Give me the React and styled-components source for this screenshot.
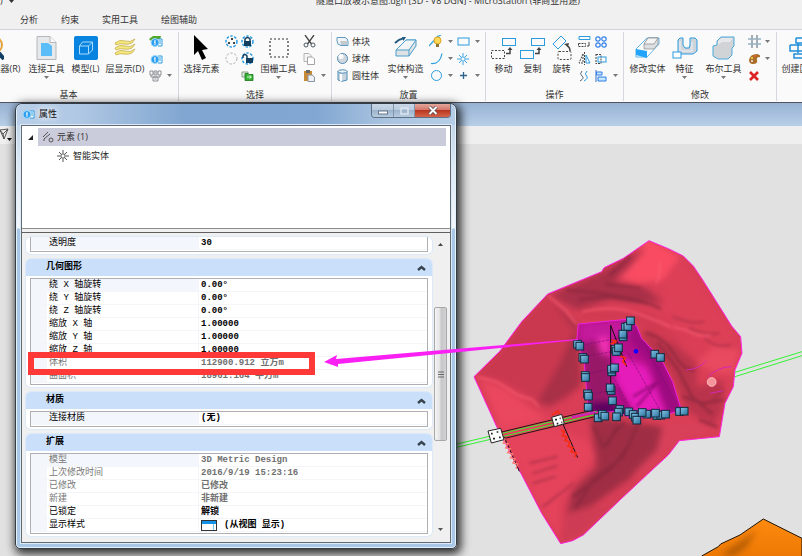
import React from 'react';
import styled, { createGlobalStyle } from 'styled-components';

const GlobalStyle = createGlobalStyle`
  * { box-sizing: border-box; }
  html, body, #root { height: 100%; }
  body {
    margin: 0;
    overflow: hidden;
    background: #e1e1e1;
    color: #333;
    font: 9px/12px "Open Sans", "Noto Sans CJK SC", sans-serif;
  }
  button {
    margin: 0; padding: 0; border: 0; background: none;
    font: inherit; color: inherit; cursor: pointer;
  }
  svg { display: block; flex: none; }
`;

/* ---------- shell ---------- */
const Page = styled.div`
  position: relative;
  display: flex;
  flex-direction: column;
  height: 100%;
  overflow: hidden;
`;
const TitleBar = styled.header`
  display: flex;
  align-items: center;
  height: 16px;
  margin-top: -7px;
  background: #f0f0f0;
`;
const QuickAccess = styled.div`
  display: flex;
  align-items: center;
  gap: 6px;
  width: 94px;
`;
const WindowTitle = styled.div`
  flex: 1;
  text-align: center;
  white-space: nowrap;
`;
const Tabs = styled.nav`
  display: flex;
  gap: 23px;
  height: 20px;
  padding: 1px 0 0 20px;
  background: #f0f0f0;
  white-space: nowrap;
`;
const TabButton = styled.button`
  height: 19px;
`;
const Ribbon = styled.div`
  display: flex;
  height: 74px;
  border-top: 1px solid #d2d4dc;
  border-bottom: 1px solid #50545c;
  background: #fafafa;
`;
const Group = styled.section`
  display: flex;
  flex-direction: column;
  flex: 0 0 ${(p) => p.$width}px;
  margin: 2px 0 1px ${(p) => p.$shift || 0}px;
  border-right: 1px solid #d5d7e0;
  overflow: hidden;
`;
const GroupBody = styled.div`
  display: flex;
  height: 53px;
  padding: 1px 0 0 ${(p) => p.$pad}px;
`;
const GroupLabel = styled.div`
  flex: 1;
  padding-top: 5px;
  text-align: center;
`;
const BigButton = styled.button`
  display: flex;
  flex-direction: column;
  align-items: center;
  flex: 0 0 ${(p) => p.$width}px;
  height: 50px;
  white-space: nowrap;
  line-height: 13px;
`;
const BigIcon = styled.span`
  display: flex;
  align-items: center;
  justify-content: center;
  height: 29px;
`;
const BigLabel = styled.span`
  display: flex;
  justify-content: center;
  width: 0;
  height: 14px;
`;
const ToolGrid = styled.div`
  display: grid;
  grid-template-columns: ${(p) => p.$cols};
  grid-auto-rows: 17px;
  flex: none;
`;
const ToolButton = styled.button`
  display: flex;
  align-items: center;
  justify-content: center;
`;
const ListTools = styled.div`
  display: grid;
  grid-auto-rows: 17px;
  width: 48px;
`;
const ListTool = styled.button`
  display: flex;
  align-items: center;
  gap: 3px;
  white-space: nowrap;
`;

/* ---------- workspace ---------- */
const Workspace = styled.main`
  display: flex;
  flex-direction: column;
  flex: 1;
  min-height: 0;
`;
const ViewTitle = styled.div`
  height: 23px;
  background: linear-gradient(#98b2d3, #b8cfe8);
`;
const ViewTools = styled.div`
  display: flex;
  align-items: center;
  height: 18px;
  background: #efefef;
`;
const Canvas = styled.div`
  flex: 1;
  min-height: 0;
  background: #e1e1e1;
`;
const Scene = styled.svg`
  width: 100%;
  height: 100%;
`;
const Annotation = styled.svg`
  position: absolute;
  top: 0;
  left: 0;
  width: 100%;
  height: 100%;
  pointer-events: none;
`;

/* ---------- dialog ---------- */
const Dialog = styled.section`
  position: absolute;
  top: 103px;
  left: 15px;
  right: 345px;
  padding: 0 5px 5px;
  border: 1px solid #343c46;
  border-radius: 7px 7px 5px 5px;
  background: linear-gradient(#b4cbe4 0, #dce8f4 60px, #f2f7fc 124px, #a6c7e6 125px, #a9c8e8 100%);
  box-shadow: inset 0 0 0 1px #e4f0fa, 2px 3px 10px 2px rgba(0, 0, 0, 0.8);
`;
const DialogTitle = styled.header`
  display: flex;
  align-items: center;
  gap: 4px;
  height: 21px;
  margin: 0 -4px;
  padding: 0 0 2px 4px;
  border-radius: 6px 6px 0 0;
  background: linear-gradient(90deg, #b9cfe8 0, #b0c8e4 60px, #7fa5d0 170px, #82a7d2 300px, #aac4e0 370px, #b5cde6);
`;
const DialogName = styled.h1`
  flex: 1;
  margin: 0;
  font: inherit;
  color: #111;
  text-shadow: 0 0 6px #fff, 0 0 8px #fff;
`;
const Caption = styled.div`
  display: flex;
  align-self: flex-start;
  height: 14px;
  margin-right: 4px;
  border: 1px solid #5f7186;
  border-top: 0;
  border-radius: 0 0 4px 4px;
  overflow: hidden;
`;
const CaptionButton = styled.button`
  display: flex;
  align-items: center;
  justify-content: center;
  width: ${(p) => (p.$close ? 36 : 21)}px;
  border-left: 1px solid #8195ab;
  background: ${(p) => (p.$close
    ? 'linear-gradient(#e4a79c, #d5776a 45%, #b93720 50%, #d4644a)'
    : 'linear-gradient(#c9d8e8, #b8cadd 45%, #9db4cc 50%, #b6cbe0)')};
  &:first-child { border-left: 0; }
`;
const DialogBody = styled.div`
  border: 1px solid #626a73;
  outline: 1px solid #dceaf7;
  background: #f0f0f0;
`;
const Tree = styled.ul`
  height: 103px;
  margin: 0;
  padding: 2px 4px 0 0;
  border-bottom: 1px solid #8c8c8c;
  background: #fff;
  list-style: none;
`;
const TreeItem = styled.li`
  display: flex;
  align-items: center;
  gap: 4px;
  height: 18px;
  margin: 0 0 1px ${(p) => p.$indent}px;
  padding-left: 3px;
  color: #222;
`;
const TreeRoot = styled.li`
  display: flex;
  align-items: center;
`;
const Selected = styled.div`
  display: flex;
  align-items: center;
  gap: 3px;
  flex: 1;
  height: 18px;
  margin-bottom: 1px;
  padding-left: 4px;
  background: #cbccdb;
`;
const Toggle = styled.button`
  display: flex;
  justify-content: center;
  width: 16px;
`;
const Pane = styled.div`
  display: flex;
  gap: 2px;
  margin-top: 3px;
  padding: 4px 3px 6px 4px;
  border-top: 1px solid #5f5f5f;
  background: #f0f0f0;
`;
const Sections = styled.div`
  display: flex;
  flex-direction: column;
  gap: 5px;
  flex: 1;
  min-width: 0;
`;
const SectionBox = styled.section`
  border-radius: 5px;
  background: #fff;
  box-shadow: 0 0 1px 1px #dce9f8;
`;
const SectionHead = styled.h2`
  margin: 0;
  border-radius: 5px 5px 0 0;
  background: #c9dffa;
  font: bold 9px/17px "Liberation Mono", "Noto Sans CJK SC", monospace;
  color: #000;
`;
const SectionToggle = styled.button`
  display: flex;
  align-items: center;
  justify-content: space-between;
  width: 100%;
  height: 17px;
  padding: 0 6px 0 20px;
`;
const TableFrame = styled.div`
  margin: 0 4px;
  padding: ${(p) => (p.$cut ? 0 : 2)}px 0 2px;
`;
const Table = styled.table`
  width: 100%;
  border: 1px solid #aeb0b3;
  border-top-width: ${(p) => (p.$cut ? 0 : 1)}px;
  padding-bottom: 1px;
  border-spacing: 0;
  table-layout: fixed;
  background: #fff;
  font: 9px/12px "Liberation Mono", "Noto Sans CJK SC", monospace;
  color: #000;
  white-space: nowrap;
`;
const Name = styled.th`
  position: relative;
  width: 167px;
  height: 13px;
  padding: 0 0 0 2px;
  border-left: 16px solid #f3f6fb;
  border-bottom: 1px solid #f4f5f8;
  font-weight: normal;
  text-align: left;
  background: ${(p) => (p.$first ? '#f3f6fc' : '#fff')};
  color: ${(p) => (p.$dim ? '#777' : '#000')};
`;
const Value = styled.td`
  height: 13px;
  padding: 0 0 0 2px;
  border-bottom: 1px solid #f4f5f8;
  border-left: 1px solid #f4f5f8;
  font-weight: bold;
  color: ${(p) => (p.$dim ? '#707070' : '#000')};
`;
const ValueInner = styled.span`
  display: flex;
  align-items: center;
  gap: 7px;
  height: 12px;
`;
const Highlight = styled.span`
  position: absolute;
  z-index: 1;
  top: -5px;
  left: -19px;
  width: 287px;
  height: 23px;
  border: 6px solid #ff3838;
`;
const ScrollBar = styled.div`
  display: flex;
  flex-direction: column;
  align-items: center;
  width: 13px;
`;
const ScrollButton = styled.button`
  display: flex;
  align-items: center;
  justify-content: center;
  width: 13px;
  height: 14px;
`;
const ScrollTrack = styled.div`
  display: flex;
  flex: 1;
  width: 13px;
  padding: 56px 0 81px;
`;
const Thumb = styled.div`
  display: flex;
  align-items: center;
  justify-content: center;
  flex: 1;
  border: 1px solid #a8a8a8;
  border-radius: 2px;
  background: linear-gradient(90deg, #f5f5f5, #e2e2e2 45%, #c6c6c8 55%, #d2d2d4);
`;

/* ---------- icons ---------- */
const B = '#2b9be0';
const K = '#444';
const Icon = ({ w = 14, h = w, children }) => (
  <svg width={w} height={h} viewBox={`0 0 ${w} ${h}`} fill="none" aria-hidden="true">{children}</svg>
);
const Caret = ({ color = '#777' }) => (
  <Icon w={5} h={3}><path d="M0 0h5L2.5 3z" fill={color} /></Icon>
);
const Magnifier = () => (
  <Icon w={22} h={24}>
    <circle cx="12" cy="9" r="8" fill="#dff0fc" stroke="#e8a33a" strokeWidth="2" />
    <path d="M16 16l6 7" stroke="#123f66" strokeWidth="4" />
  </Icon>
);
const AttachDoc = () => (
  <Icon w={22} h={26}>
    <path d="M1 1.500h13l6 6v17H1z" fill="#e6e8ea" stroke="#b4b8bc" />
    <path d="M14 1.500v6h6" fill="#fafafa" stroke="#b4b8bc" />
    <path d="M5 8h7l4 3v10H5z" fill="#5abdf8" />
  </Icon>
);
const ModelCube = () => (
  <Icon w={24}>
    <rect width="24" height="24" rx="2" fill="#0884e0" />
    <path d="M5.500 10l3-4h10v8l-4 4h-9zM5.500 10h9v8M14.500 10l4-4" stroke="#a9dcff" />
  </Icon>
);
const Layers = () => (
  <Icon w={22} h={20}>
    {[12, 7, 2].map((y) => (
      <path key={y} d={`M1 ${y + 3}q5-4 10-2t10-2l-3 4q-4 2-8 1t-8 1z`} fill="#f5e97d" stroke="#c7ad4e" strokeWidth=".8" />
    ))}
  </Icon>
);
const InfoIcon = ({ green }) => (
  <Icon w={14} h={13}>
    {green && <path d="M0 4l4-3h8l-1 4-8 2z" fill="#53a82b" />}
    <path d="M9 4h4v7H9" fill="#fff" stroke={B} />
    <path d="M10 6h2M10 8h2" stroke={B} />
    <circle cx="6" cy="7.500" r="4" fill="#2c9ff0" stroke="#a8dcfb" />
    <path d="M6 5v5M5 7h1" stroke="#fff" />
  </Icon>
);
const Keys = () => (
  <Icon w={13}>
    <path d="M1 2h3v4H1zM5 2h3v4H5zM9 2h3v4H9zM4 8h5v4H4zM2 6v2h9V6M5.500 4h2M5.500 10h2" stroke="#8b8f94" />
  </Icon>
);
const Pointer = () => (
  <Icon w={17} h={26}><path d="M1 0v20l4-4 4 9 4-2-4-8 6-1z" fill="#000" /></Icon>
);
const DashRing = ({ kind }) => (
  <Icon w={13}>
    <circle cx="6.500" cy="6.500" r="5.500" stroke={kind === 'none' ? '#a9adb3' : B} strokeWidth={kind === 'none' ? 1 : 1.5} strokeDasharray="2.500 1.500" />
    {kind === 'dots' && <path d="M6 3h2v2H6zM3 7h2v2H3zM8 7h2v2H8z" fill="#444" />}
    {kind === 'lock' && <><path d="M4 6V4q2.500-3 5 0v2" stroke="#123f5f" strokeWidth="1.500" /><path d="M3 6h7v5H3z" fill="#123f5f" /></>}
    {kind === 'open' && <><path d="M2 6V4q2-3 4 0v2" stroke="#123f5f" strokeWidth="1.500" /><path d="M5 6h7v5H5z" fill="#123f5f" /></>}
  </Icon>
);
const GreenSet = () => (
  <Icon w={13} h={10}>
    <path d="M1 1h6v5H1z" fill="#dfe8df" stroke="#8aa08a" />
    <path d="M4 2.500h3l1 1h4v6H4z" fill="#35b335" stroke="#1a741a" strokeWidth=".8" />
    <path d="M6 6h4M8.500 4.500L10.500 6 8.500 7.500" stroke="#d8ffd0" />
  </Icon>
);
const Fence = () => (
  <Icon w={20}><rect x="1" y="1" width="18" height="18" stroke="#333" strokeWidth="1.200" strokeDasharray="2 2" /></Icon>
);
const CutIcon = () => (
  <Icon w={13}>
    <path d="M2 0l6.500 9M11 0L4.500 9" stroke="#444" strokeWidth="1.300" />
    <circle cx="3" cy="10" r="2" stroke="#4b5864" /><circle cx="10" cy="10" r="2" stroke="#4b5864" />
  </Icon>
);
const CopyIcon = () => (
  <Icon w={12}><path d="M1 .5h5l2 2v6H1z" fill="#f5f5f5" stroke="#b5b5b5" /><path d="M4.500 4h5l2 2v5.500h-7z" fill="#fff" stroke="#a5a5a5" /></Icon>
);
const PasteIcon = () => (
  <Icon w={12}><path d="M1 1h8v10H1z" fill="#c98a38" /><path d="M3 0h4v3H3z" fill="#666" /><path d="M5 5h4l2.500 2v4.500H5z" fill="#eef1f5" stroke="#8a94a0" /></Icon>
);
const Slab = () => (
  <Icon w={13} h={11}><path d="M1 1.500h8q3 1 3 4v4H5Q1 9 1 5z" fill="#f2f4f6" stroke="#5d9cc4" /><path d="M4 5h7v4H5z" fill="#c3c9ce" /></Icon>
);
const Ball = () => (
  <Icon w={13}><circle cx="6.500" cy="6.500" r="5" fill="#cfd6dc" stroke="#4d8cb8" /><circle cx="5" cy="4.500" r="2.500" fill="#fff" /></Icon>
);
const Cylinder = () => (
  <Icon w={13}><path d="M2 2v9q4.500 2.500 9 0V2" fill="#c8d4df" stroke="#4d8cb8" /><ellipse cx="6.500" cy="2.500" rx="4.500" ry="1.700" fill="#eef3f7" stroke="#4d8cb8" /><path d="M5 5v7" stroke="#fff" strokeWidth="2" /></Icon>
);
const Extrude = () => (
  <Icon w={24} h={22}>
    <path d="M2 13L12 3h10v6l-7 10H2z" fill="#dfe2e5" stroke="#4c9ecb" />
    <path d="M2 13L12 3h10l-7 10z" fill="#f3f4f5" stroke="#4c9ecb" /><path d="M15 13v6" stroke="#4c9ecb" />
    <path d="M1 6q4-4 8-4.500" stroke="#235a80" strokeWidth="1.800" /><path d="M8 0h4L9.500 4z" fill="#235a80" />
  </Icon>
);
const LineBulb = () => (
  <Icon w={14}><path d="M0 11L9 1M8 2l4-2" stroke="#37a7d8" strokeWidth="1.300" /><circle cx="8.500" cy="5.500" r="3.500" fill="#ffd95a" stroke="#dfa21c" /><path d="M7 9h3v3H7z" fill="#8a7436" /></Icon>
);
const RectIcon = () => <Icon w={13}><rect x="1" y="3" width="11" height="7" stroke={B} /></Icon>;
const ArcIcon = () => <Icon w={13}><path d="M1 11.500q9 1 11-10" stroke={B} strokeWidth="1.200" /></Icon>;
const CircleIcon = () => <Icon w={13}><circle cx="6.500" cy="6.500" r="5" stroke={B} /></Icon>;
const Sun = ({ color = B }) => (
  <Icon w={12}><circle cx="6" cy="6" r="2.200" stroke={color} /><path d="M6 0v3M6 9v3M0 6h3M9 6h3M2 2l2 2M8 8l2 2M10 2L8 4M4 8l-2 2" stroke={color} strokeWidth=".9" /></Icon>
);
const Plus = () => <Icon w={9}><path d="M4.500 1v7M1 4.500h7" stroke="#2c628c" strokeWidth="1.300" /></Icon>;
const MoveIcon = ({ copy }) => (
  <Icon w={25} h={24}>
    <rect x="11.500" y="2.500" width="13" height="7" stroke={B} />
    {copy
      ? <rect x=".5" y="14.500" width="13" height="8" stroke={B} />
      : <rect x=".5" y="14.500" width="13" height="8" stroke={K} strokeDasharray="2 1.500" />}
    <path d="M15 17.500h4V13" stroke={K} strokeWidth="1.500" /><path d="M16.500 14l2.500-3 2.500 3z" fill={K} />
  </Icon>
);
const RotateIcon = () => (
  <Icon w={20} h={26}>
    <path d="M9 1l5 5-8 8-5-5z" stroke={B} />
    <rect x="6" y="16.500" width="13" height="8" rx="1" stroke={K} strokeDasharray="2 1.500" />
    <path d="M18 16q0-4-3-5" stroke={K} strokeWidth="1.500" /><path d="M12 9l5-1-1 4z" fill={K} />
  </Icon>
);
const SwapIcon = () => <Icon w={13}><path d="M1 1.500h11v3H1z" stroke={B} /><path d="M.5 8.500h7v3h-7z" stroke={K} strokeDasharray="2 1" /><path d="M9 11h2V7" stroke={K} /></Icon>;
const Array4 = () => (
  <Icon w={12}>{[[3, 3], [9, 3], [3, 9], [9, 9]].map(([x, y]) => <circle key={x + '-' + y} cx={x} cy={y} r="2.200" stroke="#2f7fe8" strokeWidth="1.200" />)}</Icon>
);
const MirrorIcon = () => <Icon w={13}><path d="M5 2v9H1zM6.500 0v13" stroke={K} strokeDasharray="2 1" /><path d="M8 3v8h4z" stroke={B} /></Icon>;
const StretchIcon = () => <Icon w={12}><path d="M1 1v10M1 1.500h5v9H1" stroke={K} strokeDasharray="2 1" /><rect x="3" y="4" width="8" height="5" stroke={B} /></Icon>;
const WaveIcon = () => <Icon w={12}><path d="M4 1q-3 3 0 5t-2 5" stroke="#55697a" /><path d="M9 1Q6 4 8.500 6T6 11" stroke={B} /></Icon>;
const AlignIcon = () => <Icon w={12}><path d="M1 0v12" stroke="#2f6ec8" /><path d="M1.500 2H7v3H1.500zM3 7h8v4H3z" fill="#c5e6fb" stroke="#2f7fe8" /></Icon>;
const EditSolid = () => (
  <Icon w={25} h={22}>
    <path d="M1 12l11-11h12v6L12 20H1z" fill="#fff" stroke="#5fb4e8" /><path d="M1 12l11 2v7L1 18z" fill="#24a4fa" />
    <path d="M9 7l4-6h10v6l-4 5H9z" fill="#dcdfe2" stroke="#888" strokeWidth=".7" /><path d="M9 7l4-6h10l-4 6z" fill="#f4f4f4" stroke="#888" strokeWidth=".7" />
  </Icon>
);
const FeatureIcon = () => (
  <Icon w={26} h={22}>
    <path d="M6 3l2-2h3v7l2 3h4l1-3V1h5l2 2v11l-4 3H9l-3-2z" fill="#cfd4da" stroke={B} />
    <path d="M8 4v10h12V5" stroke="#eef1f4" />
    <rect x="1" y="15" width="8" height="6" fill="#fff" stroke={B} />
  </Icon>
);
const BooleanIcon = () => (
  <Icon w={23} h={24}>
    <path d="M5 5l4-4h13v9l-2 2v7l-4 4H6l-5-3V10l4-1z" fill="#d0d4d7" stroke="#4ba9df" /><path d="M6 5l4-3h11l-3 4h-8L6 9" fill="#e6e8ea" />
  </Icon>
);
const HashIcon = () => <Icon w={13}><path d="M4 0v13M9 0v13" stroke="#4c6474" /><path d="M0 4h3M5 4h3M10 4h3M0 9h3M5 9h3M10 9h3" stroke="#5b8eae" /></Icon>;
const Palette = () => (
  <Icon w={13} h={12}><path d="M1 7q1-6 8-6 4 1 3 3-4 0-3 3 1 4-4 4-4 0-4-4z" fill="#a96f28" /><circle cx="4" cy="5" r="1" fill="#ffdc55" /><circle cx="7" cy="3" r="1" fill="#f4593c" /><circle cx="4" cy="8" r="1" fill="#eee" /></Icon>
);
const DeleteIcon = () => <Icon w={10}><path d="M1 1l8 8M9 1L1 9" stroke="#dc2424" strokeWidth="2.600" /></Icon>;
const CreateIcon = () => <Icon w={22} h={24}><path d="M7 2h15M7 2v5h15M1 9h21M1 9v6h21M9 7v10M5 18h16v4H5z" stroke="#1f8ed8" strokeWidth="1.500" /></Icon>;
const Funnel = () => (
  <Icon w={13} h={14}><path d="M0 2l8-1-4 10zM0 2l3 4 5-5M3 6l1 5" stroke="#555" /><path d="M7 10h5l-2.500 3z" fill="#111" /></Icon>
);
const ElementIcon = () => (
  <Icon w={12}><path d="M1 6l5-5M2 10V8l6-5" stroke="#555" /><circle cx="9" cy="9" r="2" stroke="#555" /></Icon>
);
const Chevron = () => <Icon w={9} h={6}><path d="M1 5l3.500-3L8 5" stroke="#38434d" strokeWidth="2.400" /></Icon>;
const StyleSwatch = () => (
  <Icon w={16} h={11}><rect x=".5" y=".5" width="15" height="10" fill="#fff" stroke="#333" /><path d="M1 1h14v3H1z" fill="#1492e8" /><path d="M12.500 4v6" stroke="#7cc4f2" /></Icon>
);

/* ---------- ribbon data ---------- */
const V = <Caret />;
const groups = [
  {
    label: '基本', width: 220, shift: -41, pad: 2,
    items: [
      { big: '资源管理器(R)', icon: <Magnifier />, width: 63 },
      { big: '连接工具', icon: <AttachDoc />, width: 45, menu: true },
      { big: '模型(L)', icon: <ModelCube />, width: 33 },
      { big: '层显示(D)', icon: <Layers />, width: 46 },
      { cols: '15px 13px', tools: [['元素信息', <InfoIcon green />], null, ['属性', <InfoIcon />], null, ['键入命令', <Keys />], ['更多', V]] },
    ],
  },
  {
    label: '选择', width: 153, pad: 1,
    items: [
      { big: '选择元素', icon: <Pointer />, width: 43 },
      { cols: '16px 16px', tools: [['全选', <DashRing kind="dots" />], ['锁定', <DashRing kind="lock" />], ['取消选择', <DashRing kind="none" />], ['解锁', <DashRing kind="open" />], null, ['图组', <GreenSet />]] },
      { big: '围栅工具', icon: <Fence />, width: 47, menu: true },
      { cols: '14px 14px', tools: [['剪切', <CutIcon />], null, ['复制', <CopyIcon />], null, ['粘贴', <PasteIcon />], ['更多', V]] },
    ],
  },
  {
    label: '放置', width: 154, pad: 4,
    items: [
      { list: [['体块', <Slab />], ['球体', <Ball />], ['圆柱体', <Cylinder />]] },
      { big: '实体构造', icon: <Extrude />, width: 43, menu: true },
      {
        cols: '18px 10px 16px 12px',
        tools: [['智能线', <LineBulb />], ['更多', V], ['块', <RectIcon />], ['更多', V], ['弧', <ArcIcon />], ['更多', V], ['点', <Sun />], null, ['圆', <CircleIcon />], ['更多', V], ['十字', <Plus />], ['更多', V]],
      },
    ],
  },
  {
    label: '操作', width: 138, pad: 3,
    items: [
      { big: '移动', icon: <MoveIcon />, width: 29 },
      { big: '复制', icon: <MoveIcon copy />, width: 29 },
      { big: '旋转', icon: <RotateIcon />, width: 29 },
      { cols: '16px 18px 10px', tools: [['缩放', <SwapIcon />], ['阵列', <Array4 />], null, ['镜像', <MirrorIcon />], ['拉伸', <StretchIcon />], null, ['平行', <WaveIcon />], ['对齐', <AlignIcon />], ['更多', V]] },
    ],
  },
  {
    label: '修改', width: 153, pad: 2,
    items: [
      { big: '修改实体', icon: <EditSolid />, width: 43 },
      { big: '特征', icon: <FeatureIcon />, width: 31, menu: true },
      { big: '布尔工具', icon: <BooleanIcon />, width: 47, menu: true },
      { cols: '14px 12px', tools: [['修剪', <HashIcon />], ['更多', V], ['更改属性', <Palette />], ['更多', V], ['删除', <DeleteIcon />], null] },
    ],
  },
  { label: '', width: 153, pad: 4, items: [{ big: '创建区域', icon: <CreateIcon />, width: 37 }] },
];

function RibbonItem({ item }) {
  if (item.big) {
    return (
      <BigButton $width={item.width}>
        <BigIcon>{item.icon}</BigIcon>
        <BigLabel>{item.big}</BigLabel>
        {item.menu && <Caret />}
      </BigButton>
    );
  }
  if (item.list) {
    return <ListTools>{item.list.map(([t, icon]) => <ListTool key={t}>{icon}{t}</ListTool>)}</ListTools>;
  }
  return (
    <ToolGrid $cols={item.cols}>
      {item.tools.map((t, i) => (t ? <ToolButton key={i} aria-label={t[0]}>{t[1]}</ToolButton> : <span key={i} />))}
    </ToolGrid>
  );
}

/* ---------- property data ---------- */
const sections = [
  { rows: [{ n: '透明度', v: '30' }] },
  {
    title: '几何图形',
    rows: [
      { n: '绕 X 轴旋转', v: '0.00°' }, { n: '绕 Y 轴旋转', v: '0.00°' }, { n: '绕 Z 轴旋转', v: '0.00°' },
      { n: '缩放 X 轴', v: '1.00000' }, { n: '缩放 Y 轴', v: '1.00000' }, { n: '缩放 Z 轴', v: '1.00000' },
      { n: '体积', v: '112900.912 立方m', dim: true, mark: true },
      { n: '曲面积', v: '18961.164 平方m', dim: true },
    ],
  },
  { title: '材质', rows: [{ n: '连接材质', v: '(无)' }] },
  {
    title: '扩展',
    rows: [
      { n: '模型', v: '3D Metric Design', dim: true }, { n: '上次修改时间', v: '2016/9/19 15:23:16', dim: true },
      { n: '已修改', v: '已修改', dim: true }, { n: '新建', v: '非新建', dim: true },
      { n: '已锁定', v: '解锁' }, { n: '显示样式', v: '(从视图 显示)', swatch: true },
    ],
  },
];

function PropertySection({ title, rows }) {
  return (
    <SectionBox>
      {title && <SectionHead><SectionToggle>{title}<Chevron /></SectionToggle></SectionHead>}
      <TableFrame $cut={!title}>
        <Table $cut={!title}>
          <tbody>
            {rows.map((r, i) => (
              <tr key={r.n}>
                <Name scope="row" $first={i === 0} $dim={r.dim}>{r.n}{r.mark && <Highlight />}</Name>
                <Value $dim={r.dim}><ValueInner>{r.swatch && <StyleSwatch />}{r.v}</ValueInner></Value>
              </tr>
            ))}
          </tbody>
        </Table>
      </TableFrame>
    </SectionBox>
  );
}

function PropertiesDialog() {
  return (
    <Dialog aria-label="属性">
      <DialogTitle>
        <InfoIcon />
        <DialogName>属性</DialogName>
        <Caption>
          <CaptionButton aria-label="最小化"><Icon w={10} h={9}><rect x=".5" y="5" width="9" height="3" fill="#fff" stroke="#66788c" /></Icon></CaptionButton>
          <CaptionButton aria-label="最大化"><Icon w={9} h={8}><rect x="1" y="1" width="7" height="6" stroke="#dce6f0" strokeWidth="1.500" /></Icon></CaptionButton>
          <CaptionButton $close aria-label="关闭"><Icon w={10} h={9}><path d="M1.500 1l7 7M8.500 1l-7 7" stroke="#52484c" strokeWidth="3.500" /><path d="M1.500 1l7 7M8.500 1l-7 7" stroke="#fff" strokeWidth="2" /></Icon></CaptionButton>
        </Caption>
      </DialogTitle>
      <DialogBody>
        <Tree>
          <TreeRoot>
            <Toggle aria-label="折叠"><Icon w={5}><path d="M5 0v5H0z" fill="#222" /></Icon></Toggle>
            <Selected><ElementIcon />元素 (1)</Selected>
          </TreeRoot>
          <TreeItem $indent={32}><Sun color="#444" />智能实体</TreeItem>
        </Tree>
        <Pane>
          <Sections>{sections.map((s, i) => <PropertySection key={i} {...s} />)}</Sections>
          <ScrollBar>
            <ScrollButton aria-label="向上滚动"><Icon w={5} h={3}><path d="M0 3h5L2.500 0z" fill="#444" /></Icon></ScrollButton>
            <ScrollTrack><Thumb><Icon w={6} h={7}><path d="M0 1h6M0 3.500h6M0 6h6" stroke="#666" /></Icon></Thumb></ScrollTrack>
            <ScrollButton aria-label="向下滚动"><Caret color="#555" /></ScrollButton>
          </ScrollBar>
        </Pane>
      </DialogBody>
    </Dialog>
  );
}

/* ---------- terrain drawing ---------- */
const OUTLINE = 'M597 62L655 86 700 108 730 138 755 175 810 262 845 318 872 350 876 400 855 450 850 500 825 550 808 650 688 662 655 705 590 765 510 840 400 945 368 962 332 971 275 880 205 745 140 620 72 470 150 393 215 305 293 222 375 188 455 155 462 143 520 115Z';
const CUT = 'M385 312L540 297 560 318 575 355 610 392 640 430 668 485 695 572 620 590 545 595 500 575 415 577 402 420 380 365Z';
const handles = [
  [382, 372], [389, 378], [398, 412], [403, 417], [405, 466], [406, 472], [412, 521], [415, 528], [414, 561],
  [444, 593], [457, 582], [464, 588], [526, 321], [533, 319], [541, 302], [519, 350], [518, 342], [496, 388], [499, 394], [505, 383],
  [485, 455], [484, 447], [493, 443], [483, 511], [480, 503], [487, 542], [509, 568], [505, 576], [499, 590], [536, 575], [549, 583],
  [556, 591], [560, 600], [590, 582], [576, 577], [620, 586], [632, 585], [616, 579], [646, 582], [688, 574], [702, 573], [614, 402], [631, 412],
];

function Terrain() {
  return (
    <Scene viewBox="0 144 802 412" preserveAspectRatio="xMinYMin slice" fill="none" role="img" aria-label="三维地形模型">
      <defs>
        <clipPath id="land"><path d={OUTLINE} /></clipPath>
        <clipPath id="pit"><path d={CUT} /></clipPath>
        <filter id="soft" x="-20%" y="-20%" width="140%" height="140%" colorInterpolationFilters="sRGB"><feGaussianBlur stdDeviation="10" /></filter>
        <filter id="fine" x="-20%" y="-20%" width="140%" height="140%" colorInterpolationFilters="sRGB"><feGaussianBlur stdDeviation="4" /></filter>
        <linearGradient id="box" x1="0" y1="0" x2="1" y2="1"><stop stopColor="#83c4ea" /><stop offset="1" stopColor="#2a7098" /></linearGradient>
        <linearGradient id="orange" x1="0" y1="0" x2="0" y2="1"><stop stopColor="#ff8a10" /><stop offset="1" stopColor="#e87400" /></linearGradient>
      </defs>
      <g transform="translate(450 220) scale(.33333)">
        <path d={OUTLINE} fill="#da3e56" />
        <g clipPath="url(#land)">
          <g filter="url(#soft)">
            <path d="M590 50L690 110 640 180 560 190 500 170z" fill="#f94c62" />
            <path d="M455 155L590 80 530 150 490 185 590 205 640 250 480 240 380 270 300 225 380 190z" fill="#a83048" />
            <path d="M293 222L360 285 380 360 400 480 350 540 265 560 250 535 150 480 80 465 150 393 215 305z" fill="#c9384f" />
            <path d="M310 250L375 330 330 430 265 545 300 560 390 500 385 310z" fill="#a83047" />
            <path d="M700 130L790 260 850 350 830 420 740 350 640 270 650 190z" fill="#dc4057" />
            <path d="M570 330L650 350 740 430 740 500 820 480 820 560 790 620 710 570 660 450 600 390z" fill="#b9344b" />
            <path d="M420 590L500 600 640 620 660 670 590 740 420 860 350 880 370 810 440 740z" fill="#9f2e44" />
            <path d="M640 610L800 620 690 660 590 750 540 770 620 690z" fill="#d8405a" />
            <path d="M130 610L320 620 420 670 440 710 390 760 330 850 330 960 250 830z" fill="#e4435b" />
            <path d="M350 880L460 860 590 760 390 945 330 970z" fill="#cd3c54" />
            <path d="M90 475L170 510 250 570 300 600 150 620z" fill="#ea485f" />
            <path d="M400 265L600 280 700 370 640 370 550 300 400 300z" fill="#d03a51" />
            <path d="M790 380L870 390 850 460 800 460 740 430z" fill="#e94a60" />
          </g>
          <g filter="url(#fine)" strokeLinecap="round">
            <path d="M298 230l50 42 30 38M85 472q60 10 90 35t70 30l20 22M400 275q90-20 160 5t100 40M670 320q40 10 60 20t50 5M620 190q10-25 10-60" stroke="#fa5b70" strokeWidth="7" strokeOpacity=".7" />
            <path d="M350 210l100 10 120 20 60 25M390 238l90-8 120 22M470 192l100 12M590 340q50 10 80 60t60 50M625 370l60 80 40 80 60 50M430 620l30 60 60-70M470 680l30-60M570 600l-50 110-90 70-50 80M540 670l-60 80-110 80M750 600l50 20M700 530l60 20 60-10M540 110l-60 55" stroke="#82243b" strokeWidth="8" strokeOpacity=".6" />
            <path d="M670 290q60 25 90 15M720 325q45 20 85 15M765 355q30 30 75 20M780 550l40-40M240 730l80-20M250 760l70-22M250 790l65-20M280 860l90-70" stroke="#9a2b42" strokeWidth="6" strokeOpacity=".6" />
          </g>
        </g>
        <path d={OUTLINE} stroke="#ff24e4" strokeWidth="3" />
        <path d={CUT} fill="#b7108b" />
        <g clipPath="url(#pit)">
          <g filter="url(#soft)">
            <path d="M390 310L550 300 560 330 480 355 390 370z" fill="#c31a9c" />
            <path d="M400 370L480 360 480 560 420 575z" fill="#981868" />
            <path d="M485 400L590 440 650 580 560 585 500 490z" fill="#e51cba" />
            <path d="M440 350h40v60l-30-10z" fill="#f02fb4" />
            <path d="M540 300L640 430 690 570 650 580 600 430 540 360z" fill="#9c0b80" />
            <path d="M420 550l70-5 20 40-90-5z" fill="#5a0060" />
          </g>
          <path d="M500 500l40 80M550 530l75-45-65 75" stroke="#8f0975" strokeWidth="6" filter="url(#fine)" />
          <path d="M385 378l150-30M405 410l80-15M405 465l80-20M415 525l70-15M575 355l110 210M535 400l100 180M490 470l60 110" stroke="#75106e" strokeWidth="2" strokeDasharray="8 4" />
        </g>
        <path d={CUT} stroke="#f01fe2" strokeWidth="3" />
        <path d="M708 450q40-2 60-28M775 470q30-30 70-30M780 520l40-8" stroke="#d327b8" strokeWidth="3" />
        <path d="M20 672L440 574M20 682L440 583M855 457L1056 395M855 470L1056 407" stroke="#32f232" strokeWidth="3" />
        <path d="M155 636L430 570M160 656L435 590" stroke="#261414" strokeWidth="3" />
        <path d="M365 592l70-15" stroke="#cf20c0" strokeWidth="6" />
        <path d="M162 650L208 754M338 610L383 713M482 316v175M482 316L530 440" stroke="#160c12" strokeWidth="3" />
        <path d="M155 650l10 8-5 12 14 0-7 14 14 2-8 12 15 4-7 12 14 2-6 13 14 3-5 14" stroke="#ff7d75" strokeWidth="4" />
        <path d="M333 630l10 5-6 12 14 4-6 10 15 6-6 12 14 4-5 12 16 4-4 12M510 408l16 6-8 10 10 12M305 585l20-12 2 10M484 360l14 3-12 7h12" stroke="#f72c12" strokeWidth="5" />
        <g fill="#fff" stroke="#222" strokeWidth="3">
          <path d="M114 633l38-8 10 34-38 10z" /><path d="M305 592l30-9 8 28-30 9z" />
          <path d="M123 641h5M140 636h5M129 656h6M147 652h5M315 599h6M329 595h3M320 611h5M334 607h3" strokeWidth="5" />
        </g>
        <circle cx="558" cy="394" r="7" fill="#1600ff" />
        <circle cx="785" cy="486" r="13" fill="#f5959b" stroke="#ffc0c0" strokeWidth="3" />
        {handles.map(([x, y]) => (
          <rect key={x + '-' + y} x={x - 11} y={y - 11} width="23" height="23" fill="url(#box)" stroke="#102a3c" strokeWidth="3" />
        ))}
        <path d="M755 1008L805 980 812 972 870 945 940 897 1056 955V1040H755z" fill="url(#orange)" stroke="#1c1408" strokeWidth="3" />
        <path d="M810 1005l60-40 50-35-30 50-40 30z" fill="#a85504" fillOpacity=".8" filter="url(#soft)" />
      </g>
    </Scene>
  );
}

export default function App() {
  return (
    <Page lang="zh-CN">
      <GlobalStyle />
      <TitleBar>
        <QuickAccess><span>)</span><Caret color="#333" /></QuickAccess>
        <WindowTitle>隧道口放坡示意图.dgn [3D - V8 DGN] - MicroStation (非商业用途)</WindowTitle>
      </TitleBar>
      <Tabs>
        {['分析', '约束', '实用工具', '绘图辅助'].map((t) => <TabButton key={t}>{t}</TabButton>)}
      </Tabs>
      <Ribbon>
        {groups.map((g) => (
          <Group key={g.label} $width={g.width} $shift={g.shift}>
            <GroupBody $pad={g.pad}>{g.items.map((item, i) => <RibbonItem key={i} item={item} />)}</GroupBody>
            <GroupLabel>{g.label}</GroupLabel>
          </Group>
        ))}
      </Ribbon>
      <Workspace>
        <ViewTitle />
        <ViewTools><ToolButton aria-label="视图属性"><Funnel /></ToolButton></ViewTools>
        <Canvas><Terrain /></Canvas>
      </Workspace>
      <PropertiesDialog />
      <Annotation viewBox="0 0 802 556" preserveAspectRatio="xMinYMin slice" aria-hidden="true">
        <path d="M324 362L337 355 336 359 455 349 578 339 578 340 460 352 338 364 338 367z" fill="#fa20f4" />
      </Annotation>
    </Page>
  );
}
